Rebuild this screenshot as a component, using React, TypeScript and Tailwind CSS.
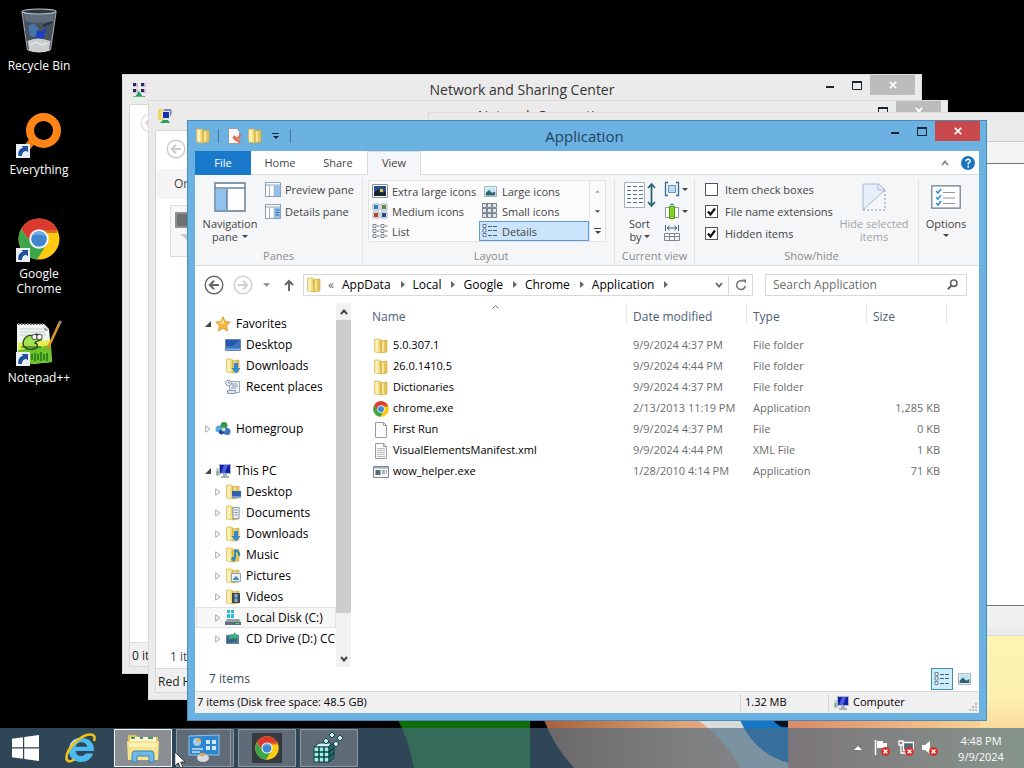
import React, { useState } from 'react';

type IconProps = { className?: string };

/* ---------- Icons ---------- */

function FolderIcon({ className = 'size-4 shrink-0', children }: IconProps & { children?: React.ReactNode }) {
  return (
    <svg viewBox="0 0 16 16" className={className}>
      <path d="M1.500 1h5l1.500 1v13l-6.500-1z" fill="#f3df85" stroke="#d2b24c" strokeWidth=".6" />
      <path d="M7 3l7-1v12l-6 1z" fill="#e6c45a" stroke="#c9a33c" strokeWidth=".6" />
      <path d="M2.500 2h2.500v12l-2.500-.5z" fill="#fbf2bd" />
      <path d="M9 3.500h2v10.500H9z" fill="#f6e39a" />
      {children}
    </svg>
  );
}

function ChromeIcon({ className = 'size-4 shrink-0' }: IconProps) {
  return (
    <svg viewBox="0 0 42 42" className={className}>
      <circle cx="21" cy="21" r="20.500" fill="#fccb12" />
      <path d="M3.200 11A20.500 20.500 0 0 0 19 41.400L29.500 25 21 21 13 24z" fill="#3da648" />
      <path d="M3.200 11A20.500 20.500 0 0 1 39.500 12H21L13 24z" fill="#dc3a30" />
      <path d="M39.500 12H21v3l18 0z" fill="#c32c22" opacity=".6" />
      <circle cx="21" cy="21" r="9.800" fill="#f3f6f8" />
      <circle cx="21" cy="21" r="7.800" fill="#3f86cf" />
      <path d="M14 18a7.800 7.800 0 0 1 14 0q-7-3-14 0z" fill="#71aee6" />
    </svg>
  );
}

function ShortcutArrow() {
  return (
    <g>
      <rect x="1" y="32" width="14" height="14" fill="#e8eef4" />
      <path d="M3.500 44c-.8-4.500 1.200-7.500 4.500-8.300L6.700 34H13v6.500l-1.900-1.700c-2.600.6-4.300 2.300-4.100 5.200z" fill="#23509c" />
    </g>
  );
}

function RecycleBinIcon() {
  return (
    <svg viewBox="0 0 48 48" className="size-12">
      <path d="M7 3h34l-5.500 39q-11.500 4-22 0z" fill="#47525e" />
      <path d="M9 5h30l-1 8q-14 4-28 0z" fill="#5f6c79" />
      <path d="M13 18l6-3 5 6-4 8-5-1z" fill="#4674a6" />
      <path d="M22 22l5 2 5-6-3 12-8 1z" fill="#1b3fc0" />
      <path d="M28 18l9-4" stroke="#272f3b" strokeWidth="2" />
      <path d="M12.500 33q10-5 23 0l-1.500 9q-10 4-20 0z" fill="#c9cdcd" />
      <path d="M15 37l6-3 6 3 5-2" stroke="#f5f5f5" fill="none" />
      <ellipse cx="24" cy="3.500" rx="17" ry="2.500" fill="#2e3741" stroke="#bfc6cc" strokeWidth="1.200" />
      <path d="M7 4l5.500 38M41 4l-5.500 38" stroke="#9ba4ad" strokeWidth="1.200" />
      <path d="M13 42q11 4 22 0" stroke="#d5d9dc" fill="none" strokeWidth="1.200" />
    </svg>
  );
}

function EverythingIcon() {
  return (
    <svg viewBox="0 0 48 48" className="size-12">
      <path d="M19 27l-9 11" stroke="#f47c12" strokeWidth="7" />
      <circle cx="28.500" cy="18.500" r="13.500" fill="none" stroke="#ff8418" strokeWidth="8" />
      <ShortcutArrow />
    </svg>
  );
}

function ChromeDesktopIcon() {
  return (
    <svg viewBox="0 0 48 48" className="size-12">
      <svg x="3" y="2" width="42" height="42" viewBox="0 0 42 42"><ChromeIcon className="" /></svg>
      <ShortcutArrow />
    </svg>
  );
}

function NotepadIcon() {
  return (
    <svg viewBox="0 0 48 48" className="size-12">
      <path d="M2 4h27l5 5 3 33-20 2-15-6z" fill="#f2f4ee" />
      <path d="M3 4h25" stroke="#555" strokeWidth="2" strokeDasharray="1.500 1.500" />
      <path d="M5 9h22M5 12h25M5 15h26" stroke="#b9c6d0" strokeWidth=".8" />
      <path d="M3 23l32-3 1 8-33 5z" fill="#e5ee50" />
      <path d="M3 30l33-5 1 17-21 2-13-4z" fill="#6cc42c" />
      <path d="M8 24c0-6 5-10 10-8 4-4 10 0 8 4-3 1-5 0-6 3 4 1 3 6-2 6-6 1-9-1-10-5z" fill="#a4e052" stroke="#1f4710" strokeWidth="1.300" />
      <circle cx="19.500" cy="17" r="2.700" fill="#fff" stroke="#222" strokeWidth=".8" />
      <circle cx="24.500" cy="17" r="2.700" fill="#fff" stroke="#222" strokeWidth=".8" />
      <path d="M6 27h20" stroke="#1f4710" />
      <path d="M17 40v-6M20 41v-8M23 40v-6M26 41v-9M29 40v-6M32 41v-8" stroke="#1d6a1a" strokeWidth="1.400" />
      <path d="M28 7l6 3-4 1z" fill="#999" />
      <path d="M45 2L33 28" stroke="#d79a27" strokeWidth="2.600" />
      <path d="M46 1l-2 3" stroke="#888" strokeWidth="2.600" />
      <path d="M33.500 26l-2 5 3-3z" fill="#e36b2b" />
      <ShortcutArrow />
    </svg>
  );
}

function NetworkIcon() {
  return (
    <svg viewBox="0 0 16 16" className="size-4">
      <path d="M2 1h5v4H2zM10 1h5v4h-5zM2 7h5v4H2zM10 7h5v4h-5z" fill="#c9b6d6" />
      <path d="M2 1h3v3H2zM10 1h3v3h-3zM2 7h3v3H2zM10 7h3v3h-3z" fill="#272a55" />
      <path d="M8 9l4 6H4z" fill="#22a060" />
      <path d="M2 14.500h12" stroke="#57b884" />
    </svg>
  );
}

function ConnectionsIcon() {
  return (
    <svg viewBox="0 0 16 16" className="size-4">
      <path d="M1 1h7v11H1z" fill="#ecd96c" />
      <path d="M7 1h7q2 4-1 8H7z" fill="#7c86c6" />
      <path d="M5 3h8v8H5z" fill="#e3e8f2" />
      <path d="M6 4h6v6H6z" fill="#1c2fa5" />
      <path d="M3 15l3-3h5l2 3z" fill="#22a060" />
    </svg>
  );
}

function ComputerIcon() {
  return (
    <svg viewBox="0 0 16 16" className="size-4 shrink-0">
      <path d="M1 5h4v8H1z" fill="#ccd5cf" />
      <path d="M1.500 8h2v4h-2z" fill="#7da57d" />
      <path d="M4 1h12v10H4z" fill="#a9b3cc" />
      <path d="M5 2h10v8H5z" fill="#1420a4" />
      <path d="M9 2h4l-3 8H6z" fill="#4c5fdf" />
      <path d="M8 11h4v2H8zM6 13h8v2H6z" fill="#a9afb6" />
    </svg>
  );
}

function StarIcon() {
  return (
    <svg viewBox="0 0 16 16" className="size-4 shrink-0">
      <path d="M8 .8l2.100 4.800 5.200.5-3.900 3.500 1.200 5.400L8 12.200 3.400 15l1.200-5.400L.7 6.100l5.200-.5z" fill="#f8b63a" stroke="#dc8a1f" strokeWidth=".8" />
      <path d="M8 3l1.300 3.500L8 8 3.500 7l3-.5z" fill="#fde59a" />
    </svg>
  );
}

function MonitorIcon() {
  return (
    <svg viewBox="0 0 16 16" className="size-4 shrink-0">
      <path d="M.5 2.500h15v11H.5z" fill="#3d74c0" stroke="#6d88a8" />
      <path d="M1 3h14L7 9H1z" fill="#2457ad" />
      <path d="M1 11.500h14V13H1z" fill="#76aee4" />
    </svg>
  );
}

function RecentIcon() {
  return (
    <svg viewBox="0 0 16 16" className="size-4 shrink-0">
      <path d="M3.500 2.500h11v11h-9z" fill="#eef2f6" stroke="#9aa7b4" />
      <path d="M6 5h6M7 7h6M6 9h5" stroke="#8397b5" />
      <circle cx="3.500" cy="4" r="2.800" fill="#f5f7f9" stroke="#8a99ab" />
      <path d="M3.500 2.500V4H5" stroke="#5c6b80" fill="none" strokeWidth=".8" />
      <path d="M2.500 11.500h8v3h-8z" fill="#dde5ee" stroke="#8a99ab" />
    </svg>
  );
}

function HomegroupIcon() {
  return (
    <svg viewBox="0 0 16 16" className="size-4 shrink-0">
      <circle cx="4" cy="8" r="3.500" fill="#54adde" />
      <circle cx="9" cy="4.500" r="3.500" fill="#38974c" />
      <circle cx="12" cy="10.500" r="3.500" fill="#4170bd" />
      <circle cx="6.500" cy="11" r="2.500" fill="#253f9b" />
      <circle cx="8.500" cy="8.500" r="2" fill="#b7e0c4" />
    </svg>
  );
}

function DiskIcon() {
  return (
    <svg viewBox="0 0 16 16" className="size-4 shrink-0">
      <path d="M2 0h3v3H2zM6 0h3v3H6zM2 4h3v4H2zM6 4h3v4H6z" fill="#25bdd8" />
      <path d="M2 9h12l2 3v3H0v-3z" fill="#93a0a8" />
      <path d="M0 12h16v3H0z" fill="#5e7182" />
      <path d="M11 13h3v1h-3z" fill="#72d35b" />
    </svg>
  );
}

function CdIcon() {
  return (
    <svg viewBox="0 0 16 16" className="size-4 shrink-0">
      <path d="M1 4l8-1 5 1v9H1z" fill="#5d84a4" />
      <path d="M2 6l10-1v6L2 12z" fill="#3c6385" />
      <path d="M4 9q0-5 5-5.500V1l4 4-4 4V6.500Q6 7 4 9z" fill="#2fbb74" />
    </svg>
  );
}

function PageIcon({ lines = false }: { lines?: boolean }) {
  return (
    <svg viewBox="0 0 16 16" className="size-4 shrink-0">
      <path d="M2.500.5h8l3 3v12h-11z" fill="#fdfdfd" stroke="#9b9b9b" />
      <path d="M10.500.5v3h3" fill="none" stroke="#9b9b9b" />
      {lines && <path d="M4 5.500h8M4 7.500h8M4 9.500h8M4 11.500h8M4 13.500h8" stroke="#b9b9b9" />}
    </svg>
  );
}

function ExeIcon() {
  return (
    <svg viewBox="0 0 16 16" className="size-4 shrink-0">
      <path d="M.5 2.500h15v11H.5z" fill="#f3f5f6" stroke="#7e868c" />
      <path d="M1 3h14v1.500H1z" fill="#9fb3c4" />
      <path d="M2.500 6h5v5h-5z" fill="#5a6b73" />
      <path d="M9 7h3M9 9h3M13 7h1M13 9h1" stroke="#5a6b73" />
    </svg>
  );
}

function PictureIcon({ dark = false, className = 'h-[14px] w-4' }: { dark?: boolean; className?: string }) {
  return (
    <svg viewBox="0 0 16 14" className={className}>
      <path d="M.5.5h15v13H.5z" fill="#fff" stroke="#7f93a6" />
      <path d="M2 2h12v10H2z" fill={dark ? '#2d4d92' : '#bfe6ef'} />
      <path d="M2 9l4-4 4 4 4-2v5H2z" fill={dark ? '#20262d' : '#2b6173'} />
      {dark && <path d="M8 5h3v3H8z" fill="#e8c33c" />}
    </svg>
  );
}

function MediumTilesIcon() {
  return (
    <svg viewBox="0 0 16 16" className="size-4">
      <path d="M1 1h6v6H1zM9 1h6v6H9zM1 9h6v6H1zM9 9h6v6H9z" fill="#fff" stroke="#8b9db0" strokeWidth=".8" />
      <path d="M2 2h4v4H2z" fill="#2a83b5" />
      <path d="M10 2h4v4h-4z" fill="#5e8740" />
      <path d="M2 10h4v4H2z" fill="#bb3d1f" />
      <path d="M10 10h4v4h-4z" fill="#1f4b8b" />
    </svg>
  );
}

function SmallTilesIcon() {
  return (
    <svg viewBox="0 0 16 16" className="size-4">
      {[0.5, 5.5, 10.5].map((y) =>
        [0.5, 5.5, 10.5].map((x) => (
          <rect key={`${x}-${y}`} x={x} y={y} width="4" height="4" fill="#dfe7ee" stroke="#66717c" strokeWidth=".8" />
        ))
      )}
    </svg>
  );
}

function ListIcon() {
  return (
    <svg viewBox="0 0 16 16" className="size-4">
      <path d="M1 1.500h3v3H1zM1 6.500h3v3H1zM1 11.500h3v3H1zM9 1.500h3v3H9zM9 6.500h3v3H9zM9 11.500h3v3H9z" fill="#fff" stroke="#6d7883" strokeWidth=".9" />
      <path d="M5 3h2.500M5 8h2.500M5 13h2.500M13 3h2.500M13 8h2.500M13 13h2.500" stroke="#6d7883" />
    </svg>
  );
}

function DetailsIcon() {
  return (
    <svg viewBox="0 0 16 16" className="size-4">
      <path d="M1 1.500h3v3H1zM1 6h3v3H1zM1 10.500h3v3H1z" fill="#fff" stroke="#55718c" strokeWidth=".9" />
      <path d="M6 3.500h4M11 3.500h4M6 7.500h4M11 7.500h4M6 12.500h4M11 12.500h4" stroke="#3f6284" />
    </svg>
  );
}

function PaneIcon({ side, className }: { side: 'left' | 'right' | 'details'; className: string }) {
  return (
    <svg viewBox="0 0 32 30" className={className} preserveAspectRatio="none">
      <path d="M1 1h30v28H1z" fill="#fff" stroke="#5f7a94" strokeWidth="1.400" />
      <path d="M1 6h30" stroke="#5f7a94" strokeWidth="1.400" />
      {side === 'left' && <path d="M2 7h11v21H2z" fill="#8fc2ee" />}
      {side === 'left' && <path d="M13 7v21" stroke="#5f7a94" strokeWidth="1.400" />}
      {side !== 'left' && <path d="M19 7h11v21H19z" fill="#8fc2ee" />}
      {side !== 'left' && <path d="M9 7v21M18.500 7v21" stroke="#7b93aa" strokeWidth="1.400" />}
      {side === 'details' && <path d="M21 12h8M21 17h8M21 22h8" stroke="#2b6aa8" strokeWidth="2" />}
    </svg>
  );
}

function Caret({ className = 'h-[3px] w-[6px]' }: IconProps) {
  return (
    <svg viewBox="0 0 6 3" className={className}>
      <path d="M0 0h6L3 3z" fill="currentColor" />
    </svg>
  );
}

/* ---------- Window chrome ---------- */

function MinGlyph() {
  return (
    <svg viewBox="0 0 8 10" className="h-[10px] w-2"><path d="M0 6h8v2H0z" fill="currentColor" /></svg>
  );
}

function MaxGlyph() {
  return (
    <svg viewBox="0 0 10 9" className="h-[9px] w-[10px]">
      <path d="M.5 .5h9v8h-9z" fill="none" stroke="currentColor" />
      <path d="M0 0h10v2H0z" fill="currentColor" />
    </svg>
  );
}

function CloseGlyph() {
  return (
    <svg viewBox="0 0 8 8" className="size-2">
      <path d="M.8.8l6.400 6.400M7.200.8L.8 7.200" stroke="#fff" strokeWidth="1.700" />
    </svg>
  );
}

function WindowControls({ active = false }: { active?: boolean }) {
  return (
    <div className="flex h-5 w-[120px] shrink-0 justify-end self-start pr-[6px] text-[#1b2530]">
      <button aria-label="Minimize" className="flex w-7 items-center justify-center"><MinGlyph /></button>
      <button aria-label="Maximize" className="flex w-[26px] items-center justify-center"><MaxGlyph /></button>
      <button
        aria-label="Close"
        className={`flex w-[45px] items-center justify-center ${active ? 'bg-[#c9484b]' : 'bg-[#bcbcbc]'}`}
      >
        <CloseGlyph />
      </button>
    </div>
  );
}

function BackArrow({ className = 'size-5' }: IconProps) {
  return (
    <svg viewBox="0 0 20 20" className={className} fill="none" stroke="currentColor">
      <circle cx="10" cy="10" r="8.800" strokeWidth="1.400" />
      <path d="M15 10H6M10 5.800L5.800 10l4.200 4.200" strokeWidth="2" />
    </svg>
  );
}

interface BackWindowProps {
  title: string;
  icon: React.ReactNode;
  className: string;
  children?: React.ReactNode;
}

function BackWindow({ title, icon, className, children }: BackWindowProps) {
  return (
    <section className={`absolute flex h-[600px] w-[800px] flex-col border border-[#dcdcdc] bg-[#ebebeb] px-[6px] pb-[6px] ${className}`}>
      <header className="-mr-[6px] flex h-[29px] shrink-0 items-center">
        <div className="flex w-[114px] pl-[2px]">{icon}</div>
        <h2 className="flex-1 text-center text-sm text-[#333]">{title}</h2>
        <WindowControls />
      </header>
      <div className="flex min-h-0 flex-1 flex-col border border-[#d8d8d8] bg-white">{children}</div>
    </section>
  );
}

/* ---------- Ribbon ---------- */

function RibbonGroup({ label, className, children }: { label: string; className: string; children: React.ReactNode }) {
  return (
    <div className={`flex shrink-0 flex-col border-r border-[#e2e3e4] ${className}`}>
      <div className="flex flex-1">{children}</div>
      <div className="h-[17px] text-center text-[11px] leading-4 text-[#8a8a8a]">{label}</div>
    </div>
  );
}

function LayoutOption({ icon, label, active = false }: { icon: React.ReactNode; label: string; active?: boolean }) {
  return (
    <button
      className={`flex h-5 items-center gap-1 border pl-[2px] text-left ${
        active ? 'border-[#5c9bd5] bg-[#cce4fb]' : 'border-transparent'
      }`}
    >
      <span className="flex w-4 shrink-0 justify-center">{icon}</span>
      <span className="whitespace-nowrap">{label}</span>
    </button>
  );
}

function RibbonCheckbox({ id, label, defaultChecked = false }: { id: string; label: string; defaultChecked?: boolean }) {
  const [checked, setChecked] = useState(defaultChecked);
  return (
    <label htmlFor={id} className="flex h-[22px] items-center gap-[7px]">
      <span className="relative flex size-[13px]">
        <input
          id={id}
          type="checkbox"
          checked={checked}
          onChange={() => setChecked(!checked)}
          className="size-[13px] appearance-none border border-[#555] bg-white"
        />
        {checked && (
          <svg viewBox="0 0 13 13" className="pointer-events-none absolute inset-0 size-[13px]">
            <path d="M3 6.500l2.500 3L10 3.500" fill="none" stroke="#111" strokeWidth="2.200" />
          </svg>
        )}
      </span>
      {label}
    </label>
  );
}

function Ribbon() {
  return (
    <div className="flex h-[91px] shrink-0 border-b border-[#dadbdc] bg-[#f5f6f7] pt-[3px] text-[11px] leading-[13px] text-[#444]">
      <RibbonGroup label="Panes" className="w-[168px]">
        <button className="flex w-[70px] flex-col items-center pt-1">
          <PaneIcon side="left" className="mb-[5px] h-[30px] w-8" />
          <span>Navigation</span>
          <span className="flex items-center gap-1">pane <Caret /></span>
        </button>
        <div className="flex flex-col">
          <button className="flex h-[22px] items-center gap-1">
            <PaneIcon side="right" className="h-[15px] w-4" />Preview pane
          </button>
          <button className="flex h-[22px] items-center gap-1">
            <PaneIcon side="details" className="h-[15px] w-4" />Details pane
          </button>
        </div>
      </RibbonGroup>

      <RibbonGroup label="Layout" className="w-[252px] pl-[5px]">
        <div className="mt-[2px] flex h-[62px] border border-[#e3e4e5] bg-[#fbfbfc]">
          <div className="grid grid-cols-[110px_110px] grid-rows-3">
            <LayoutOption icon={<PictureIcon dark />} label="Extra large icons" />
            <LayoutOption icon={<PictureIcon className="h-[11px] w-[13px]" />} label="Large icons" />
            <LayoutOption icon={<MediumTilesIcon />} label="Medium icons" />
            <LayoutOption icon={<SmallTilesIcon />} label="Small icons" />
            <LayoutOption icon={<ListIcon />} label="List" />
            <LayoutOption icon={<DetailsIcon />} label="Details" active />
          </div>
          <div className="grid w-4 grid-rows-3 border-l border-[#e3e4e5]">
            <button aria-label="Previous row" className="flex items-center justify-center text-[#aaa]"><Caret className="h-[3px] w-[5px] rotate-180" /></button>
            <button aria-label="Next row" className="flex items-center justify-center"><Caret className="h-[3px] w-[5px]" /></button>
            <button aria-label="More layouts" className="flex flex-col items-center justify-center gap-[2px]">
              <span className="h-px w-[7px] bg-[#444]" /><Caret />
            </button>
          </div>
        </div>
      </RibbonGroup>

      <RibbonGroup label="Current view" className="w-[80px]">
        <button className="flex w-[49px] flex-col items-center pt-1">
          <svg viewBox="0 0 32 26" className="mb-[9px] h-[26px] w-8">
            <path d="M.5.5h20v25H.5z" fill="#fff" stroke="#9fb0bd" />
            <path d="M3 4.500h16M3 8.500h16M3 12.500h16M3 16.500h16M3 20.500h16" stroke="#50788c" strokeDasharray="4 2" />
            <path d="M27.500 2v22M24 6l3.500-4L31 6M24 20l3.500 4 3.500-4" fill="none" stroke="#2a6477" strokeWidth="1.800" />
          </svg>
          <span>Sort</span>
          <span className="flex items-center gap-[2px]">by <Caret /></span>
        </button>
        <div className="flex flex-col">
          <button aria-label="Group by" className="flex h-[22px] items-center gap-[2px]">
            <svg viewBox="0 0 16 16" className="size-4">
              <path d="M4 1.500H1.500v13H4M12 1.500h2.500v13H12" fill="none" stroke="#3a6a8f" strokeWidth="1.300" />
              <path d="M4.500 4.500h7v7h-7z" fill="#b9dcf3" stroke="#5d95bd" />
            </svg>
            <Caret />
          </button>
          <button aria-label="Add columns" className="flex h-[22px] items-center gap-[2px]">
            <svg viewBox="0 0 16 16" className="size-4">
              <path d="M1.500 4.500h13v10h-13z" fill="#fff" stroke="#8b98a3" />
              <path d="M5.500 3.500h5v12h-5z" fill="#7ed321" stroke="#4f9e16" />
              <path d="M6 1.500h4" stroke="#4a8da0" strokeWidth="1.500" />
            </svg>
            <Caret />
          </button>
          <button aria-label="Size all columns to fit" className="flex h-[22px] items-center">
            <svg viewBox="0 0 16 18" className="h-[18px] w-4">
              <path d="M1.500 1v6M14.500 1v6M3 4h10M5.500 1.800L3 4l2.500 2.200M10.500 1.800L13 4l-2.500 2.200" fill="none" stroke="#34627c" />
              <path d="M.5 9.500h15v7H.5zM5.500 9.500v7M10.500 9.500v7M.5 12.500h15" fill="none" stroke="#7f8890" />
            </svg>
          </button>
        </div>
      </RibbonGroup>

      <RibbonGroup label="Show/hide" className="w-[224px] pl-[10px]">
        <div className="flex w-[130px] flex-col whitespace-nowrap">
          <RibbonCheckbox id="item-check-boxes" label="Item check boxes" />
          <RibbonCheckbox id="file-name-extensions" label="File name extensions" defaultChecked />
          <RibbonCheckbox id="hidden-items" label="Hidden items" defaultChecked />
        </div>
        <button disabled className="flex w-[78px] flex-col items-center pt-[5px] text-[#a2a5a8]">
          <svg viewBox="0 0 24 28" className="mb-[6px] h-7 w-6">
            <path d="M1 1h16l6 6L1 27z" fill="#e9effa" stroke="#a9b8d8" />
            <path d="M23 7v20H1" fill="none" stroke="#8a9abb" strokeDasharray="2 2" />
            <path d="M16 1v6h7" fill="none" stroke="#a9b8d8" />
          </svg>
          <span className="whitespace-nowrap">Hide selected</span>
          <span>items</span>
        </button>
      </RibbonGroup>

      <button className="flex flex-1 flex-col items-center pt-[7px] pr-[6px]">
        <svg viewBox="0 0 30 24" className="mb-2 h-6 w-[30px]">
          <path d="M.8.8h28.400v22.400H.8z" fill="#fff" stroke="#6c7a86" strokeWidth="1.200" />
          <path d="M5 6l2 2 3-4M5 12l2 2 3-4M5 18l2 2 3-4" fill="none" stroke="#2c8fcb" strokeWidth="1.500" />
          <path d="M12 7.500h12M12 13h12M12 18.500h12" stroke="#8d98a1" />
        </svg>
        <span>Options</span>
        <Caret className="mt-1 h-[3px] w-[6px]" />
      </button>
    </div>
  );
}

/* ---------- Explorer ---------- */

const breadcrumbs = ['AppData', 'Local', 'Google', 'Chrome', 'Application'];

function AddressRow() {
  return (
    <div className="flex h-[37px] shrink-0 items-center pr-3 pl-[9px] text-[#555]">
      <button aria-label="Back" className="mr-[9px] text-[#666]"><BackArrow /></button>
      <button aria-label="Forward" className="mr-[10px] text-[#cfcfcf]"><BackArrow className="size-5 rotate-180" /></button>
      <button aria-label="Recent locations" className="mr-[14px] text-[#888]"><Caret className="h-1 w-[7px]" /></button>
      <button aria-label="Up" className="mr-[9px]">
        <svg viewBox="0 0 10 12" className="h-3 w-[10px]"><path d="M5 12V2M1 6l4-4 4 4" fill="none" stroke="#666" strokeWidth="2" /></svg>
      </button>
      <div className="flex h-[22px] min-w-0 flex-1 items-center border border-[#d9d9d9] pl-[2px] text-xs text-black">
        <FolderIcon />
        <span className="ml-[6px] text-[#666]">«</span>
        {breadcrumbs.map((crumb) => (
          <React.Fragment key={crumb}>
            <button className="ml-2">{crumb}</button>
            <svg viewBox="0 0 4 7" className="ml-[10px] h-[7px] w-1"><path d="M0 0l4 3.500L0 7z" fill="#666" /></svg>
          </React.Fragment>
        ))}
        <button aria-label="Previous locations" className="mr-[5px] ml-auto">
          <svg viewBox="0 0 8 6" className="h-[6px] w-2"><path d="M1 1l3 3.500L7 1" fill="none" stroke="#666" strokeWidth="1.800" /></svg>
        </button>
        <button aria-label="Refresh" className="flex h-5 w-6 items-center justify-center border-l border-[#d9d9d9]">
          <svg viewBox="0 0 12 12" className="size-3">
            <path d="M10.300 7A4.400 4.400 0 1 1 8.500 2.500" fill="none" stroke="#777" strokeWidth="1.600" />
            <path d="M7 0.500h4v4z" fill="#777" />
          </svg>
        </button>
      </div>
      <div className="ml-3 flex h-[22px] w-[202px] items-center border border-[#d9d9d9] pr-2 pl-[7px]">
        <input
          aria-label="Search Application"
          placeholder="Search Application"
          className="min-w-0 flex-1 bg-transparent text-xs outline-none placeholder:text-[#6d6d6d]"
        />
        <svg viewBox="0 0 11 11" className="size-[11px]">
          <circle cx="6.800" cy="4.200" r="3.200" fill="none" stroke="#666" strokeWidth="1.600" />
          <path d="M4.500 6.500L.8 10.200" stroke="#666" strokeWidth="2" />
        </svg>
      </div>
    </div>
  );
}

interface TreeItem {
  label: string;
  icon: React.ReactNode;
  level: number;
  state?: 'open' | 'closed';
  selected?: boolean;
  gapBefore?: boolean;
}

const treeItems: TreeItem[] = [
  { label: 'Favorites', icon: <StarIcon />, level: 0, state: 'open' },
  { label: 'Desktop', icon: <MonitorIcon />, level: 1 },
  { label: 'Downloads', icon: <FolderIcon><path d="M9 5h4v5h2.500L11 15.500 6.500 10H9z" fill="#3488d0" /></FolderIcon>, level: 1 },
  { label: 'Recent places', icon: <RecentIcon />, level: 1 },
  { label: 'Homegroup', icon: <HomegroupIcon />, level: 0, state: 'closed', gapBefore: true },
  { label: 'This PC', icon: <ComputerIcon />, level: 0, state: 'open', gapBefore: true },
  { label: 'Desktop', icon: <FolderIcon><path d="M7 7h9v7H7z" fill="#2c5fae" /><path d="M7 12h9v2H7z" fill="#7c9cc8" /></FolderIcon>, level: 1, state: 'closed' },
  { label: 'Documents', icon: <FolderIcon><path d="M8 2.500h6v11H8z" fill="#eef2f7" stroke="#8ba0b6" /><path d="M9.500 5h3M9.500 7.500h3M9.500 10h3" stroke="#6f87a1" /></FolderIcon>, level: 1, state: 'closed' },
  { label: 'Downloads', icon: <FolderIcon><path d="M9 5h4v5h2.500L11 15.500 6.500 10H9z" fill="#3488d0" /></FolderIcon>, level: 1, state: 'closed' },
  { label: 'Music', icon: <FolderIcon><path d="M10 3v8M10 3q5 2 4 6" stroke="#2e8fb0" fill="none" strokeWidth="2" /><circle cx="8.500" cy="12" r="2.300" fill="#2e8fb0" /></FolderIcon>, level: 1, state: 'closed' },
  { label: 'Pictures', icon: <FolderIcon><path d="M6.500 5.500h9v8h-9z" fill="#e6f1f7" stroke="#8ba5ba" /><path d="M8 11l3-3 3 3v1H8z" fill="#4d8bb0" /></FolderIcon>, level: 1, state: 'closed' },
  { label: 'Videos', icon: <FolderIcon><path d="M7 4h8v10H7z" fill="#3d4a55" /><path d="M9.500 5h3v3.500h-3zM9.500 9.500h3V13h-3z" fill="#7fb4d8" /></FolderIcon>, level: 1, state: 'closed' },
  { label: 'Local Disk (C:)', icon: <DiskIcon />, level: 1, state: 'closed', selected: true },
  { label: 'CD Drive (D:) CCC', icon: <CdIcon />, level: 1, state: 'closed' },
];

function TreeRow({ item }: { item: TreeItem }) {
  return (
    <button
      className={`flex h-[21px] w-full shrink-0 items-center overflow-hidden border text-left ${
        item.level === 0 ? 'pl-2' : 'pl-[18px]'
      } ${item.selected ? 'border-[#e2e2e2] bg-[#f7f7f7]' : 'border-transparent'} ${item.gapBefore ? 'mt-[21px]' : ''}`}
    >
      <span className="flex w-[10px] shrink-0">
        {item.state === 'open' && <svg viewBox="0 0 6 6" className="size-[6px]"><path d="M6 0v6H0z" fill="#444" /></svg>}
        {item.state === 'closed' && (
          <svg viewBox="0 0 6 8" className="h-2 w-[6px]"><path d="M.7 .8L5 4 .7 7.200z" fill="none" stroke="#a8a8a8" /></svg>
        )}
      </span>
      {item.icon}
      <span className="ml-[5px] whitespace-nowrap">{item.label}</span>
    </button>
  );
}

function NavigationPane() {
  return (
    <div className="flex w-[157px] shrink-0">
      <nav className="flex w-[141px] flex-col overflow-hidden pt-[10px] pl-px text-xs text-black">
        {treeItems.map((item, index) => (
          <TreeRow key={index} item={item} />
        ))}
      </nav>
      <div className="flex w-[15px] flex-col bg-[#f1f1f1]">
        <button aria-label="Scroll up" className="flex h-[17px] items-center justify-center">
          <svg viewBox="0 0 8 6" className="h-[6px] w-2"><path d="M1 5l3-3.500L7 5" fill="none" stroke="#444" strokeWidth="2" /></svg>
        </button>
        <div className="h-[293px] bg-[#cdcdcd]" />
        <button aria-label="Scroll down" className="mt-auto flex h-[17px] items-center justify-center">
          <svg viewBox="0 0 8 6" className="h-[6px] w-2"><path d="M1 1l3 3.500L7 1" fill="none" stroke="#444" strokeWidth="2" /></svg>
        </button>
      </div>
    </div>
  );
}

const files = [
  { name: '5.0.307.1', icon: <FolderIcon />, date: '9/9/2024 4:37 PM', type: 'File folder', size: '' },
  { name: '26.0.1410.5', icon: <FolderIcon />, date: '9/9/2024 4:44 PM', type: 'File folder', size: '' },
  { name: 'Dictionaries', icon: <FolderIcon />, date: '9/9/2024 4:37 PM', type: 'File folder', size: '' },
  { name: 'chrome.exe', icon: <ChromeIcon />, date: '2/13/2013 11:19 PM', type: 'Application', size: '1,285 KB' },
  { name: 'First Run', icon: <PageIcon />, date: '9/9/2024 4:37 PM', type: 'File', size: '0 KB' },
  { name: 'VisualElementsManifest.xml', icon: <PageIcon lines />, date: '9/9/2024 4:44 PM', type: 'XML File', size: '1 KB' },
  { name: 'wow_helper.exe', icon: <ExeIcon />, date: '1/28/2010 4:14 PM', type: 'Application', size: '71 KB' },
];

const columns = [
  { label: 'Name', width: 'w-[275px]', padding: 'pl-5' },
  { label: 'Date modified', width: 'w-[120px]', padding: 'pl-[6px]' },
  { label: 'Type', width: 'w-[120px]', padding: 'pl-[6px]' },
  { label: 'Size', width: 'w-[80px]', padding: 'pl-[6px]' },
];

function FileTable() {
  return (
    <div className="min-w-0 flex-1">
      <table className="w-[595px] table-fixed border-collapse text-[11px] text-[#6d6d6d]">
        <thead>
          <tr className="h-[32px] align-top text-xs text-[#4c607a]">
            {columns.map((col) => (
              <th key={col.label} scope="col" className={`p-0 text-left font-normal ${col.width}`}>
                <div className={`relative flex h-[20px] border-r border-[#e5e5e5] pt-[6px] leading-4 ${col.padding}`}>
                  {col.label}
                  {col.label === 'Name' && (
                    <svg viewBox="0 0 7 4" className="absolute top-[2px] left-[140px] h-1 w-[7px]">
                      <path d="M.5 3.500l3-3 3 3" fill="none" stroke="#777" />
                    </svg>
                  )}
                </div>
              </th>
            ))}
          </tr>
        </thead>
        <tbody>
          {files.map((file) => (
            <tr key={file.name} className="h-[21px]">
              <td className="p-0 pl-[21px]">
                <div className="flex items-center gap-1 text-black">{file.icon}{file.name}</div>
              </td>
              <td className="p-0 pl-[6px] whitespace-nowrap">{file.date}</td>
              <td className="p-0 pl-[6px]">{file.type}</td>
              <td className="p-0 pr-[7px] text-right">{file.size}</td>
            </tr>
          ))}
        </tbody>
      </table>
    </div>
  );
}

function ExplorerWindow() {
  return (
    <section className="absolute top-[120px] left-[187px] flex h-[601px] w-[800px] flex-col border border-[#4a8ab8] bg-[#6bb1e1] px-[7px] pb-[7px]">
      <header className="-mr-[7px] flex h-[30px] shrink-0 items-center">
        <div className="flex w-[108px] items-center text-[#1b2530]">
          <FolderIcon />
          <span className="mx-[7px] h-[14px] w-px bg-[#48799c]" />
          <button aria-label="Properties" className="mr-[5px]">
            <svg viewBox="0 0 16 16" className="size-4">
              <path d="M2.500.5h8l3 3v12h-11z" fill="#fafafa" stroke="#9b9b9b" />
              <path d="M7 9l3 3 5-5M8 8l6 7" fill="none" stroke="#e8694f" strokeWidth="2" />
            </svg>
          </button>
          <button aria-label="New folder" className="mr-[9px]"><FolderIcon /></button>
          <button aria-label="Customize toolbar" className="mr-[11px] flex flex-col items-center gap-[2px]">
            <span className="h-px w-[7px] bg-[#1b2530]" /><Caret />
          </button>
          <span className="h-[14px] w-px bg-[#48799c]" />
        </div>
        <h1 className="flex-1 text-center text-[15px] text-[#1f4560]">Application</h1>
        <WindowControls active />
      </header>

      <div className="flex min-h-0 flex-1 flex-col bg-white">
        <div className="flex h-6 shrink-0 items-stretch text-[11px] text-[#444]">
          <button className="w-14 bg-[#1979ca] text-white">File</button>
          <div className="flex flex-1 border-b border-[#dadbdc]">
            <button className="w-[58px] pt-[2px]">Home</button>
            <button className="w-[58px] pt-[2px]">Share</button>
            <button className="-mb-px w-[54px] border border-b-0 border-[#dadbdc] bg-[#f5f6f7]">View</button>
            <button aria-label="Minimize the Ribbon" className="mr-3 ml-auto">
              <svg viewBox="0 0 8 6" className="h-[6px] w-2"><path d="M1 5l3-3.500L7 5" fill="none" stroke="#888" strokeWidth="1.800" /></svg>
            </button>
            <button aria-label="Help" className="mr-1 flex items-center">
              <svg viewBox="0 0 14 14" className="size-[14px]">
                <circle cx="7" cy="7" r="7" fill="#1a73c0" />
                <path d="M4.800 5.400Q5 3.300 7.100 3.300 9.300 3.400 9.200 5.200 9 6.500 7.200 7.300V8.700" fill="none" stroke="#fff" strokeWidth="1.400" />
                <circle cx="7.200" cy="10.700" r="1" fill="#fff" />
              </svg>
            </button>
          </div>
        </div>
        <Ribbon />
        <AddressRow />
        <div className="flex min-h-0 flex-1">
          <NavigationPane />
          <FileTable />
        </div>
        <div className="flex h-6 shrink-0 items-center pr-2 pl-[14px] text-xs text-[#3c4a5c]">
          <span className="flex-1">7 items</span>
          <button aria-label="Details view" className="flex size-[22px] items-center justify-center border border-[#3c8fae] bg-[#cdeefa]">
            <DetailsIcon />
          </button>
          <button aria-label="Thumbnails view" className="ml-[5px]"><PictureIcon className="h-3 w-[13px]" /></button>
        </div>
        <footer className="flex h-[22px] shrink-0 items-center border-t border-[#d7d7d7] bg-[#f0f0f0] text-[11px] text-black">
          <span className="flex-1 pl-[2px]">7 items (Disk free space: 48.5 GB)</span>
          <span className="w-[88px] border-l border-[#d7d7d7] pl-1">1.32 MB</span>
          <span className="flex w-[151px] items-center gap-1 border-l border-[#d7d7d7] pl-1">
            <ComputerIcon />Computer
            <svg viewBox="0 0 9 9" className="mr-[2px] ml-auto size-[9px] self-end">
              <path d="M7 1h2v2H7zM4 4h2v2H4zM7 4h2v2H7zM1 7h2v2H1zM4 7h2v2H4zM7 7h2v2H7z" fill="#bdbdbd" />
            </svg>
          </span>
        </footer>
      </div>
    </section>
  );
}

/* ---------- Desktop ---------- */

const shortcuts = [
  { label: 'Recycle Bin', icon: <RecycleBinIcon /> },
  { label: 'Everything', icon: <EverythingIcon /> },
  { label: 'Google Chrome', icon: <ChromeDesktopIcon /> },
  { label: 'Notepad++', icon: <NotepadIcon /> },
];

function Wallpaper() {
  return (
    <svg viewBox="0 0 1024 140" preserveAspectRatio="xMidYMax slice" className="absolute inset-x-0 bottom-0 h-[140px] w-full">
      <defs>
        <linearGradient id="tan" x1="0" x2="1">
          <stop offset="0" stopColor="#a9603a" />
          <stop offset=".7" stopColor="#e0a478" />
          <stop offset="1" stopColor="#f2a98a" />
        </linearGradient>
        <linearGradient id="sand" x1="0" x2="1">
          <stop offset="0" stopColor="#d98a66" />
          <stop offset=".5" stopColor="#eeb482" />
          <stop offset="1" stopColor="#fae39c" />
        </linearGradient>
        <linearGradient id="sun" x1="0" x2="0" y1="0" y2="1">
          <stop offset="0" stopColor="#fdf4b4" />
          <stop offset=".7" stopColor="#fdf0b0" />
          <stop offset="1" stopColor="#f9da9c" />
        </linearGradient>
      </defs>
      <path d="M398 85h132v55H414q-6-30-16-48z" fill="#0f6d0a" />
      <path d="M544 85h160l40 55H574q-20-22-30-48z" fill="url(#tan)" />
      <path d="M698 85h44l46 48v7h-48q-14-28-42-48z" fill="#d9dcd8" />
      <path d="M740 85h48v50q-34-10-48-43z" fill="#1676c6" />
      <path d="M773 85h15v14q-8 2-15-7z" fill="#06121c" />
      <path d="M788 85h236v55H788z" fill="url(#sand)" />
      <path d="M980 0h44v100h-44z" fill="url(#sun)" />
    </svg>
  );
}

function TaskButton({ label, active = false, stacked = false, children }: { label: string; active?: boolean; stacked?: boolean; children: React.ReactNode }) {
  return (
    <button
      aria-label={label}
      className={`flex h-[38px] w-[58px] items-center justify-center border ${
        active ? 'border-white/90 bg-[#8b8f93]' : 'border-white/30 bg-[#5f6b77]'
      } ${stacked ? 'border-r-4 border-double' : ''}`}
    >
      {children}
    </button>
  );
}

function ErrorBadge() {
  return (
    <g>
      <circle cx="11.500" cy="11.500" r="4.500" fill="#d5332b" />
      <path d="M9.700 9.700l3.600 3.600M13.300 9.700l-3.600 3.600" stroke="#fff" strokeWidth="1.500" />
    </g>
  );
}

function Taskbar() {
  return (
    <footer className="relative flex h-10 shrink-0 items-center bg-[#486c84]/65">
      <button aria-label="Start" className="ml-3 flex">
        <svg viewBox="0 0 27 26" className="h-[26px] w-[27px]" fill="#fff">
          <path d="M0 3.800l11-1.500v10H0zM12.200 2.100L27 0v12.300H12.200zM0 13.600h11v10.100L0 22.200zM12.200 13.600H27V26l-14.800-2.100z" />
        </svg>
      </button>
      <button aria-label="Internet Explorer" className="ml-[26px] flex">
        <svg viewBox="0 0 32 32" className="size-8">
          <path d="M29 19H10.500q.8 5 5.500 5 3.200 0 4.700-2.500h7.600Q25 30 16 30 4 29.500 4 18 4.500 6 16.500 6 29 6.500 29 19zM10.700 14.800h11.500q-.8-4.300-5.700-4.500-4.800.2-5.800 4.500z" fill="#4cbcf0" />
          <path d="M5 15q2-8 11-8.500" stroke="#a5e2fb" strokeWidth="1.500" fill="none" />
          <path d="M29 9q2-6-3-6.500-7-.5-16 8T1.500 27q1.500 4.500 8 .5" fill="none" stroke="#f2c11c" strokeWidth="2.500" />
        </svg>
      </button>
      <div className="ml-[17px] flex gap-1">
        <TaskButton label="File Explorer" active>
          <svg viewBox="0 0 34 30" className="h-[30px] w-[34px]">
            <path d="M2 2h8l2 2h20v22H2z" fill="#e2c25c" />
            <path d="M4 4h26v4H4z" fill="#faf5da" />
            <path d="M5 5h4M14 5h3M22 5h5" stroke="#3a9d5a" strokeWidth="2" />
            <path d="M1 8h32l-1 19H2z" fill="#f8e38c" />
            <path d="M3 10h28v4H3z" fill="#fcf0b4" />
            <path d="M6 29v-8q0-3 3-3h16q3 0 3 3v8h-5v-6H11v6z" fill="#6db9e6" stroke="#3c86bd" />
          </svg>
        </TaskButton>
        <TaskButton label="Control Panel" stacked>
          <svg viewBox="0 0 32 28" className="h-7 w-8">
            <path d="M1 2l30-1v20H1z" fill="#2f86cd" stroke="#8cc4ed" />
            <circle cx="9" cy="8" r="4" fill="#9fcbec" />
            <path d="M9 8V4a4 4 0 0 1 4 4z" fill="#f0b23f" />
            <path d="M4 15h11M4 18h8" stroke="#c5e1f5" strokeWidth="1.500" />
            <path d="M18 6h4v4h-4zM24 6h4v4h-4zM18 12h4v4h-4zM24 12h4v4h-4z" fill="#cfe7f7" />
            <ellipse cx="15" cy="24" rx="6" ry="4" fill="#d8d9da" />
            <path d="M12 19h5v3h-5z" fill="#e3a44b" />
          </svg>
        </TaskButton>
        <TaskButton label="Google Chrome">
          <span className="flex size-[30px] items-center justify-center bg-[#343a40]"><ChromeIcon className="size-6" /></span>
        </TaskButton>
        <TaskButton label="Registry Editor">
          <svg viewBox="0 0 32 32" className="size-8" stroke="#0c3438" strokeWidth=".9">
            <path d="M1 15l5-4h12l-2 4z" fill="#c8f5f1" />
            <path d="M1 15h5v5H1zM6 15h5v5H6zM11 15h5v5h-5zM1 20h5v5H1zM6 20h5v5H6zM11 20h5v5h-5zM1 25h5v5H1zM6 25h5v5H6zM11 25h5v5h-5z" fill="#9cf0e8" />
            <path d="M16 15l5-4v5l-5 4zM16 20l5-4v5l-5 4zM16 25l5-4v5l-5 4z" fill="#1f6f72" />
            <path d="M19 0l3 3-3 3-3-3zM27 3l3 3-3 3-3-3zM23 9l3 3-3 3-3-3zM13 6l3 3-3 3-3-3z" fill="#c0f7f2" />
          </svg>
        </TaskButton>
      </div>
      <div className="ml-auto flex items-center gap-2">
        <button aria-label="Show hidden icons" className="mr-1 text-white"><Caret className="h-1 w-2 rotate-180" /></button>
        <svg viewBox="0 0 16 16" className="size-4"><path d="M1.500 0v15" stroke="#fff" strokeWidth="1.500" /><path d="M3 1h6v2h4v6H8V8H3z" fill="#fff" /><ErrorBadge /></svg>
        <svg viewBox="0 0 16 16" className="size-4">
          <path d="M5.500 2.500h10v8h-10zM7 13.500h5" fill="#526774" stroke="#fff" strokeWidth="1.300" />
          <path d="M1 1h4v4H1zM3 5v8h4" fill="none" stroke="#fff" strokeWidth="1.300" /><ErrorBadge />
        </svg>
        <svg viewBox="0 0 16 16" className="size-4"><path d="M0 5h3l5-4v13l-5-4H0z" fill="#fff" /><ErrorBadge /></svg>
      </div>
      <time className="w-[86px] pt-px text-center text-[11px] leading-4 text-white">4:48 PM<br />9/9/2024</time>
    </footer>
  );
}

export default function App() {
  return (
    <div className="relative flex h-screen w-full flex-col overflow-hidden bg-black font-['Open_Sans','Noto_Sans',sans-serif] select-none">
      <Wallpaper />
      <main className="min-h-0 flex-1">
        <div className="flex w-[78px] flex-col">
          {shortcuts.map((shortcut) => (
            <button key={shortcut.label} className="flex h-[104px] flex-col items-center pt-2 text-xs leading-[15px] text-white">
              {shortcut.icon}
              <span className="mt-[2px] w-[70px] text-center">{shortcut.label}</span>
            </button>
          ))}
        </div>

        <BackWindow title="Network and Sharing Center" icon={<NetworkIcon />} className="top-[74px] left-[122px]">
          <div className="flex-1 pt-2 pl-[10px] text-[#ddd]"><BackArrow /></div>
          <div className="flex h-[24px] items-center border-t border-[#ddd] bg-[#f0f0f0] pt-[2px] pl-[2px] text-xs text-[#222]">0 items</div>
        </BackWindow>

        <BackWindow title="Network Connections" icon={<ConnectionsIcon />} className="top-[100px] left-[148px]">
          <div className="pt-2 pb-[10px] pl-[10px] text-[#ccc]"><BackArrow /></div>
          <div className="flex h-[30px] shrink-0 items-center bg-[#f5f5f5] pl-[18px] text-xs text-[#444]">Organize</div>
          <div className="flex-1 pt-[6px] pl-[14px]">
            <div className="h-[52px] w-[200px] border border-[#ddd] bg-[#f7f7f7] p-1">
              <svg viewBox="0 0 40 40" className="size-10">
                <path d="M0 2h26v16H0z" fill="#8e9292" />
                <path d="M2 4h22v12H2z" fill="#6d7270" />
                <path d="M5 24l14 0-4 8z" fill="#c4c7c7" />
              </svg>
            </div>
          </div>
          <div className="flex h-6 items-center pt-[2px] pl-[14px] text-xs text-[#444]">1 item</div>
          <div className="flex h-[24px] items-center border-t border-[#ddd] bg-[#f0f0f0] pt-[2px] pl-[2px] text-xs text-[#222]">Red Hat</div>
        </BackWindow>

        <section className="absolute top-[112px] left-[428px] flex h-[524px] w-[800px] flex-col border border-[#dcdcdc] bg-[#ebebeb] pb-[6px]">
          <div className="h-[29px] border-b border-[#cfcfcf]" />
          <div className="h-[22px] border-b border-[#777] bg-[#f3f3f3]" />
          <div className="flex-1 bg-white" />
          <div className="h-[24px] border-t border-[#777] bg-[#f0f0f0]" />
        </section>

        <ExplorerWindow />
      </main>

      <Taskbar />

      <svg viewBox="0 0 12 18" className="pointer-events-none absolute top-[751px] left-[174px] h-[18px] w-3">
        <path d="M.8 1v14l3.400-3.200L6.500 17l2.400-1-2.200-5h4.600z" fill="#fff" stroke="#222" strokeWidth=".8" />
      </svg>
    </div>
  );
}
